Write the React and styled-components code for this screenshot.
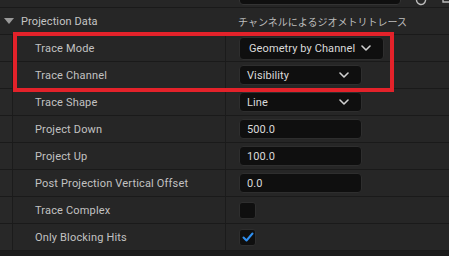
import React from "react";
import styled, { createGlobalStyle } from "styled-components";

const Global = createGlobalStyle`
  html, body { margin: 0; padding: 0; background: #1c1c1c; }
  body { font-family: Roboto, "Noto Sans CJK JP", sans-serif; }
`;

const Panel = styled.div`
  position: relative;
  width: 449px;
  height: 256px;
  overflow: hidden;
  background: #1c1c1c;
  display: flex;
  flex-direction: column;
`;

const TopStub = styled.div`
  height: 7px;
  border-bottom: 1px solid #1a1a1a;
  background: #262626;
  display: flex;
  align-items: flex-end;
  overflow: hidden;
  padding-left: 239px;
  gap: 14px;
`;

const StubBox = styled.div`
  flex: 0 0 auto;
  width: 162px;
  height: 20px;
  margin-bottom: 2px;
  box-sizing: border-box;
  background: #0f0f0f;
  border: 1px solid #333;
  border-radius: 4px;
`;

const StubIcon = styled.svg`
  flex: 0 0 auto;
  margin-bottom: 1px;
`;

const HeaderRow = styled.div`
  height: 26px;
  border-bottom: 1px solid #1a1a1a;
  background: #262626;
  display: grid;
  grid-template-columns: 225px 1fr;
  align-items: center;
`;

const HeaderName = styled.div`
  display: flex;
  align-items: center;
  gap: 7px;
  padding-left: 4px;
  color: #c4c4c4;
  font-size: 11px;
  letter-spacing: 0.1px;
`;

const HeaderValue = styled.div`
  padding-left: 13px;
  color: #bdbdbd;
  font-size: 10px;
  font-family: "Noto Sans CJK JP", Roboto, sans-serif;
  white-space: nowrap;
`;

const Row = styled.div`
  height: 26px;
  border-bottom: 1px solid #1a1a1a;
  display: grid;
  grid-template-columns: 12px 1px 212px 1px 1fr;
  align-items: stretch;
  background: #262626;
`;

const Gutter = styled.div`
  background: #282828;
`;

const Line = styled.div`
  background: #1b1b1b;
`;

const Name = styled.div`
  display: flex;
  align-items: center;
  padding-left: 22px;
  color: #c2c2c2;
  font-size: 11px;
  letter-spacing: 0.17px;
  white-space: nowrap;
`;

const Value = styled.div`
  display: flex;
  align-items: center;
  padding-left: 13px;
`;

const Box = styled.div`
  box-sizing: border-box;
  width: ${(p) => p.$w || 123}px;
  height: ${(p) => p.$h || 20}px;
  background: #0f0f0f;
  border: 1px solid #2e2e2e;
  border-radius: 4px;
  display: flex;
  align-items: center;
  justify-content: ${(p) => (p.$compact ? "flex-start" : "space-between")};
  padding: 0 ${(p) => p.$pr || 12}px 0 ${(p) => p.$pl || 7}px;
  color: #dadada;
  font-size: 11px;
  letter-spacing: 0.1px;
  white-space: nowrap;
  gap: 6px;
`;

const Check = styled.div`
  box-sizing: border-box;
  width: 17px;
  height: 17px;
  background: #0f0f0f;
  border: 1px solid #2e2e2e;
  border-radius: 3px;
  display: flex;
  align-items: center;
  justify-content: center;
`;

const Filler = styled.div`
  flex: 1;
  background: #1c1c1c;
`;

const Highlight = styled.div`
  position: absolute;
  left: 13px;
  top: 32px;
  width: 381px;
  height: 60px;
  box-sizing: border-box;
  border: 4px solid #e3222a;
  pointer-events: none;
`;

const Chevron = () => (
  <svg width="10" height="6" viewBox="0 0 10 6">
    <polyline points="1,1 5,5 9,1" fill="none" stroke="#d0d0d0" strokeWidth="1.6" strokeLinecap="round" strokeLinejoin="round" />
  </svg>
);

const Tri = () => (
  <svg width="10" height="6" viewBox="0 0 10 6">
    <polygon points="0,0 10,0 5,6" fill="#9a9a9a" />
  </svg>
);

const Tick = () => (
  <svg width="12" height="10" viewBox="0 0 12 10">
    <polyline points="1.5,5.5 4.5,8.5 10.5,1.5" fill="none" stroke="#2f8ff0" strokeWidth="2" strokeLinecap="round" strokeLinejoin="round" />
  </svg>
);

const rows = [
  { name: "Trace Mode", kind: "select", value: "Geometry by Channel", w: 145, h: 23, pl: 9, pr: 11, compact: true },
  { name: "Trace Channel", kind: "select", value: "Visibility" },
  { name: "Trace Shape", kind: "select", value: "Line" },
  { name: "Project Down", kind: "input", value: "500.0" },
  { name: "Project Up", kind: "input", value: "100.0" },
  { name: "Post Projection Vertical Offset", kind: "input", value: "0.0" },
  { name: "Trace Complex", kind: "check", value: false },
  { name: "Only Blocking Hits", kind: "check", value: true },
];

const renderValue = (r) => {
  if (r.kind === "check") return <Check>{r.value && <Tick />}</Check>;
  if (r.kind === "input") return <Box>{r.value}</Box>;
  return (
    <Box $w={r.w} $h={r.h} $pl={r.pl} $pr={r.pr} $compact={r.compact}>
      <span>{r.value}</span>
      <Chevron />
    </Box>
  );
};

export default function App() {
  return (
    <>
      <Global />
      <Panel>
        <TopStub>
          <StubBox />
          <StubIcon width="12" height="12" viewBox="0 0 12 12">
            <path d="M2 4 A4.5 4.5 0 1 0 6 1.5" fill="none" stroke="#bcbcbc" strokeWidth="1.4" />
          </StubIcon>
          <StubIcon width="10" height="12" viewBox="0 0 10 12">
            <path d="M2 2 V8 H8" fill="none" stroke="#bcbcbc" strokeWidth="1.4" />
          </StubIcon>
        </TopStub>
        <HeaderRow>
          <HeaderName>
            <Tri />
            <span>Projection Data</span>
          </HeaderName>
          <HeaderValue>チャンネルによるジオメトリトレース</HeaderValue>
        </HeaderRow>
        {rows.map((r) => (
          <Row key={r.name}>
            <Gutter />
            <Line />
            <Name>{r.name}</Name>
            <Line />
            <Value>{renderValue(r)}</Value>
          </Row>
        ))}
        <Filler />
        <Highlight />
      </Panel>
    </>
  );
}
